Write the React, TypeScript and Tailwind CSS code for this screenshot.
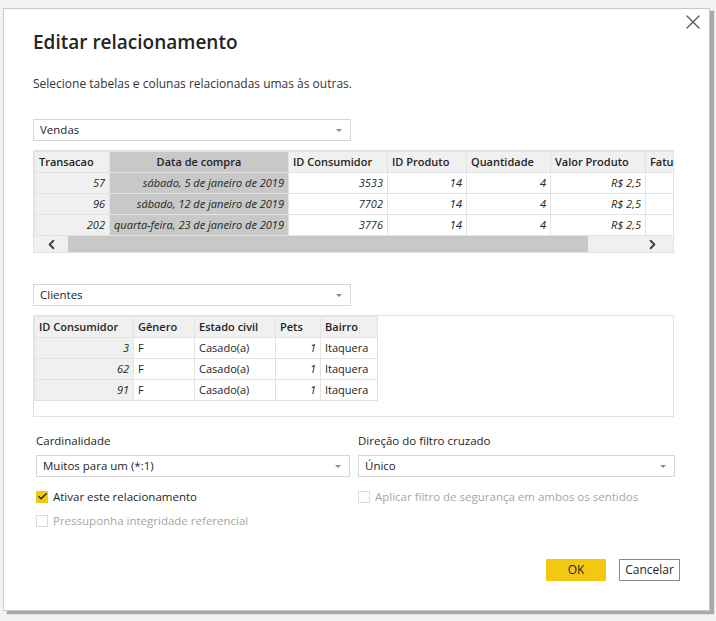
import { X, ChevronLeft, ChevronRight, Check } from 'lucide-react';

const font = { fontFamily: '"Open Sans", "Liberation Sans", sans-serif' };

function Select({ value, className = '' }: { value: string; className?: string }) {
  return (
    <div
      className={`flex h-[22px] items-center justify-between border border-[#d6d6d6] bg-white pl-[6px] pr-[8px] text-[11.5px] text-[#252423] ${className}`}
    >
      <span>{value}</span>
      <span className="h-0 w-0 border-x-[3px] border-t-[3px] border-x-transparent border-t-[#8a8a8a]" />
    </div>
  );
}

const salesCols = [
  { name: 'Transacao', w: 75 },
  { name: 'Data de compra', w: 178 },
  { name: 'ID Consumidor', w: 99 },
  { name: 'ID Produto', w: 79 },
  { name: 'Quantidade', w: 84 },
  { name: 'Valor Produto', w: 95 },
  { name: 'Faturamento', w: 60 },
];

const salesRows = [
  ['57', 'sábado, 5 de janeiro de 2019', '3533', '14', '4', 'R$ 2,5', ''],
  ['96', 'sábado, 12 de janeiro de 2019', '7702', '14', '4', 'R$ 2,5', ''],
  ['202', 'quarta-feira, 23 de janeiro de 2019', '3776', '14', '4', 'R$ 2,5', ''],
];

const clientCols = [
  { name: 'ID Consumidor', w: 99 },
  { name: 'Gênero', w: 61 },
  { name: 'Estado civil', w: 81 },
  { name: 'Pets', w: 45 },
  { name: 'Bairro', w: 57 },
];

const clientRows = [
  ['3', 'F', 'Casado(a)', '1', 'Itaquera'],
  ['62', 'F', 'Casado(a)', '1', 'Itaquera'],
  ['91', 'F', 'Casado(a)', '1', 'Itaquera'],
];

function SalesTable() {
  return (
    <div className="mt-[9px] h-[103px] w-[641px] overflow-hidden border border-[#e3e3e3] bg-[#f0f0f0]">
      <table className="table-fixed text-[11px] text-[#252423]">
        <thead>
          <tr className="h-[21px]">
            {salesCols.map((c, i) => (
              <th
                key={c.name}
                style={{ width: c.w, minWidth: c.w }}
                className={`whitespace-nowrap border border-[#e3e3e3] px-[4px] font-semibold ${
                  i === 1 ? 'bg-[#c8c8c8] text-center' : 'bg-[#f0f0f0] text-left'
                }`}
              >
                {c.name}
              </th>
            ))}
          </tr>
        </thead>
        <tbody>
          {salesRows.map((r) => (
            <tr key={r[0]} className="h-[21px]">
              {r.map((v, i) => (
                <td
                  key={i}
                  className={`whitespace-nowrap border border-[#e3e3e3] px-[4px] text-right italic ${
                    i === 0 ? 'bg-[#f0f0f0]' : i === 1 ? 'bg-[#c8c8c8]' : 'bg-white'
                  }`}
                >
                  {v}
                </td>
              ))}
            </tr>
          ))}
        </tbody>
      </table>
      <div className="flex h-[16px] items-center bg-[#f0f0f0]">
        <div className="flex w-[34px] justify-center">
          <ChevronLeft size={15} strokeWidth={3} className="text-[#404040]" />
        </div>
        <div className="h-[16px] w-[520px] bg-[#c8c8c8]" />
        <div className="flex-1" />
        <div className="flex w-[42px] justify-center">
          <ChevronRight size={15} strokeWidth={3} className="text-[#404040]" />
        </div>
      </div>
    </div>
  );
}

function ClientTable() {
  return (
    <div className="mt-[9px] h-[102px] w-[641px] overflow-hidden border border-[#e3e3e3] bg-white">
      <table className="table-fixed text-[11px] text-[#252423]">
        <thead>
          <tr className="h-[21px]">
            {clientCols.map((c) => (
              <th
                key={c.name}
                style={{ width: c.w, minWidth: c.w }}
                className="whitespace-nowrap border border-[#e3e3e3] bg-[#f0f0f0] px-[4px] text-left font-semibold"
              >
                {c.name}
              </th>
            ))}
          </tr>
        </thead>
        <tbody>
          {clientRows.map((r) => (
            <tr key={r[0]} className="h-[21px]">
              {r.map((v, i) => (
                <td
                  key={i}
                  className={`whitespace-nowrap border border-[#e3e3e3] px-[4px] ${
                    i === 0 ? 'bg-[#f0f0f0] text-right italic' : i === 3 ? 'text-right italic' : 'text-left'
                  }`}
                >
                  {v}
                </td>
              ))}
            </tr>
          ))}
        </tbody>
      </table>
    </div>
  );
}

function CheckBox({ checked, disabled, label }: { checked?: boolean; disabled?: boolean; label: string }) {
  return (
    <div className="flex items-center gap-[5px] text-[11.5px]">
      <span
        className={`flex h-[12px] w-[12px] items-center justify-center ${
          checked ? 'bg-[#f2c811]' : 'border border-[#dcdcdc] bg-white'
        }`}
      >
        {checked && <Check size={11} strokeWidth={3} className="text-[#252423]" />}
      </span>
      <span className={disabled ? 'text-[#a6a6a6]' : 'text-[#252423]'}>{label}</span>
    </div>
  );
}

export default function App() {
  return (
    <div style={font} className="h-[621px] w-[716px] overflow-hidden bg-[#f3f2f1] pl-[3px] pt-[8px]">
      <div className="relative h-[603px] w-[707px] border border-[#c8c8c8] bg-white pl-[29px] shadow-[4px_3px_1px_rgba(0,0,0,0.3)]">
        <X size={24} strokeWidth={1.2} className="absolute right-[4px] top-[1px] text-[#555]" />

        <h1 className="pt-[19px] text-[19px] font-semibold leading-[28px] text-[#252423]">Editar relacionamento</h1>
        <p className="mt-[19px] text-[12px] leading-[18px] text-[#333]">
          Selecione tabelas e colunas relacionadas umas às outras.
        </p>

        <Select value="Vendas" className="mt-[26px] w-[318px]" />
        <SalesTable />

        <Select value="Clientes" className="mt-[31px] w-[318px]" />
        <ClientTable />

        <div className="mt-[16px] flex gap-[8px] pl-[3px]">
          <div className="w-[314px]">
            <div className="text-[11.5px] leading-[16px] text-[#252423]">Cardinalidade</div>
            <Select value="Muitos para um (*:1)" className="mt-[6px]" />
          </div>
          <div className="w-[317px]">
            <div className="text-[11.5px] leading-[16px] text-[#252423]">Direção do filtro cruzado</div>
            <Select value="Único" className="mt-[6px]" />
          </div>
        </div>

        <div className="mt-[11px] flex gap-[8px] pl-[3px]">
          <div className="flex w-[314px] flex-col gap-[7px]">
            <CheckBox checked label="Ativar este relacionamento" />
            <CheckBox disabled label="Pressuponha integridade referencial" />
          </div>
          <div className="w-[317px]">
            <CheckBox disabled label="Aplicar filtro de segurança em ambos os sentidos" />
          </div>
        </div>

        <div className="mt-[29px] flex justify-end gap-[13px] pr-[29px]">
          <button className="h-[22px] w-[60px] bg-[#f2c811] text-[12px] text-[#252423]">OK</button>
          <button className="h-[22px] w-[61px] border border-[#8a8a8a] bg-white text-[12px] text-[#252423]">
            Cancelar
          </button>
        </div>
      </div>
    </div>
  );
}
